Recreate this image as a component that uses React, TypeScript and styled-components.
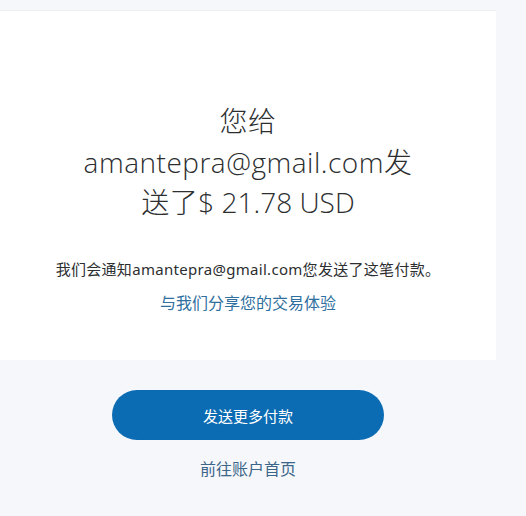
import React from 'react';
import styled, { createGlobalStyle } from 'styled-components';

const GlobalStyle = createGlobalStyle`
  html, body {
    margin: 0;
    padding: 0;
    background: #f5f7fa;
  }
  body {
    font-family: "Noto Sans", "Noto Sans CJK SC", sans-serif;
    color: #2c2e2f;
  }
`;

// Whole page - the content column sits on the left, page bg fills the rest
const Page = styled.div`
  display: flex;
  min-height: 516px;
  background: #f5f7fa;
`;

const Main = styled.main`
  width: 496px;
  padding-top: 10px;
  display: flex;
  flex-direction: column;
  align-items: center;
`;

// White confirmation card
const Card = styled.section`
  box-sizing: border-box;
  width: 100%;
  height: 350px;
  background: #ffffff;
  border-top: 1px solid #eceef1;
  padding-top: 90px;
  display: flex;
  flex-direction: column;
  align-items: center;
`;

const Title = styled.h1`
  margin: 0;
  font-family: "Open Sans", "Noto Sans CJK SC", sans-serif;
  font-weight: 300;
  font-size: 28px;
  line-height: 40.5px;
  letter-spacing: 0.5px;
  color: #2c2e2f;
  text-align: center;
`;

const Amount = styled.span`
  font-family: "Open Sans", "Noto Sans CJK SC", sans-serif;
  letter-spacing: 0;
`;

const Notice = styled.p`
  margin: 36px 0 0;
  font-size: 15px;
  line-height: 20px;
  letter-spacing: 0.3px;
  color: #2c2e2f;
  text-align: center;
`;

const Link = styled.a<{ $tone?: 'blue' | 'slate' }>`
  display: block;
  font-size: 16px;
  line-height: 22px;
  color: ${({ $tone }) => ($tone === 'slate' ? '#3b6589' : '#2f70a0')};
  text-decoration: none;
  text-align: center;
  cursor: pointer;
`;

const ShareLink = styled(Link)`
  margin-top: 13px;
`;

const PrimaryButton = styled.button`
  margin-top: 30px;
  width: 272px;
  height: 50px;
  border: none;
  border-radius: 25px;
  background: #0c6cb3;
  color: #ffffff;
  font-family: "Noto Sans", "Noto Sans CJK SC", sans-serif;
  font-size: 15px;
  cursor: pointer;

  &:hover {
    background: #005ea6;
  }
`;

const HomeLink = styled(Link)`
  margin-top: 18px;
`;

export default function App() {
  return (
    <>
      <GlobalStyle />
      <Page>
        <Main>
          <Card>
            <Title>
              您给
              <br />
              amantepra@gmail.com发
              <br />
              送了<Amount>$ 21.78 USD</Amount>
            </Title>
            <Notice>我们会通知amantepra@gmail.com您发送了这笔付款。</Notice>
            <ShareLink $tone="blue">与我们分享您的交易体验</ShareLink>
          </Card>
          <PrimaryButton>发送更多付款</PrimaryButton>
          <HomeLink $tone="slate">前往账户首页</HomeLink>
        </Main>
      </Page>
    </>
  );
}
